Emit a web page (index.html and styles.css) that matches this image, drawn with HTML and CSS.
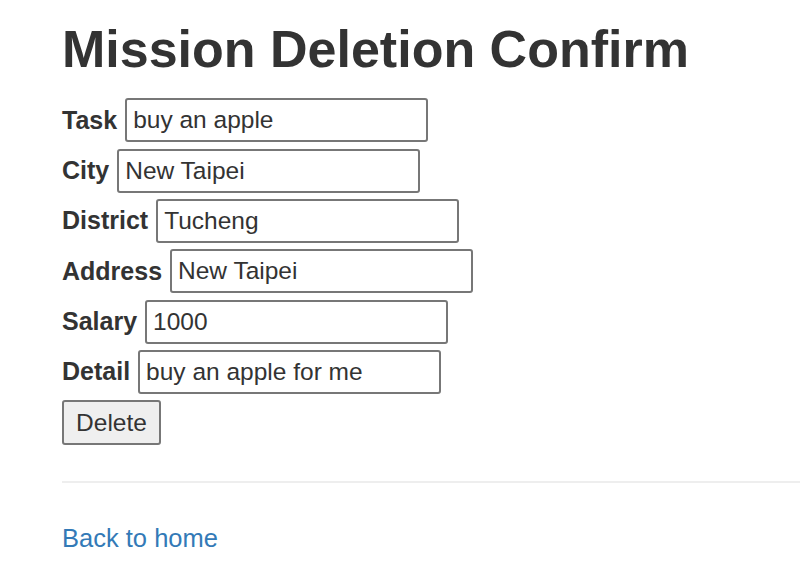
FILE: index.html
```html
<!DOCTYPE html>
<html>
<head>
<meta charset="utf-8">
<link rel="stylesheet" href="styles.css">
</head>
<body>
<div class="page">
  <h1 class="title">Mission Deletion Confirm</h1>
  <form class="form">
    <div class="row"><label class="label">Task</label><input class="field" type="text" value="buy an apple"></div>
    <div class="row"><label class="label">City</label><input class="field" type="text" value="New Taipei"></div>
    <div class="row"><label class="label">District</label><input class="field" type="text" value="Tucheng"></div>
    <div class="row"><label class="label">Address</label><input class="field" type="text" value="New Taipei"></div>
    <div class="row"><label class="label">Salary</label><input class="field" type="text" value="1000"></div>
    <div class="row"><label class="label">Detail</label><input class="field" type="text" value="buy an apple for me"></div>
    <button class="btn" type="button">Delete</button>
  </form>
  <hr class="rule">
  <a class="back" href="#">Back to home</a>
</div>
</body>
</html>
```
FILE: styles.css
```css
html, body {
  margin: 0;
  padding: 0;
  background: #fff;
}
body {
  font-family: "Liberation Sans", Arial, sans-serif;
  color: #333;
  font-size: 24.5px;
}
.page {
  padding-left: 62px;
  padding-top: 21px;
}
.title {
  margin: 0;
  font-size: 52px;
  line-height: 1.1;
  font-weight: bold;
  color: #333;
}
.form {
  margin-top: 20px;
  display: flex;
  flex-direction: column;
  align-items: flex-start;
  gap: 6.33px;
}
.row {
  display: flex;
  align-items: center;
  gap: 8px;
  height: 44px;
}
.label {
  font-weight: bold;
  font-size: 25px;
}
.field {
  box-sizing: border-box;
  width: 303px;
  height: 44px;
  border: 2px solid #777;
  border-radius: 3px;
  padding: 0 6px;
  font-family: "Liberation Sans", Arial, sans-serif;
  font-size: 24.5px;
  color: #333;
  background: #fff;
  outline: none;
}
.btn {
  box-sizing: border-box;
  width: 99px;
  height: 45px;
  border: 2px solid #777;
  border-radius: 3px;
  background: #efefef;
  font-family: "Liberation Sans", Arial, sans-serif;
  font-size: 24.5px;
  color: #333;
  padding: 0;
}
.rule {
  margin: 36px 0 0 0;
  border: 0;
  border-top: 2px solid #eee;
  height: 0;
}
.back {
  display: inline-block;
  margin-top: 41px;
  font-size: 25.5px;
  color: #337ab7;
  text-decoration: none;
}
```
